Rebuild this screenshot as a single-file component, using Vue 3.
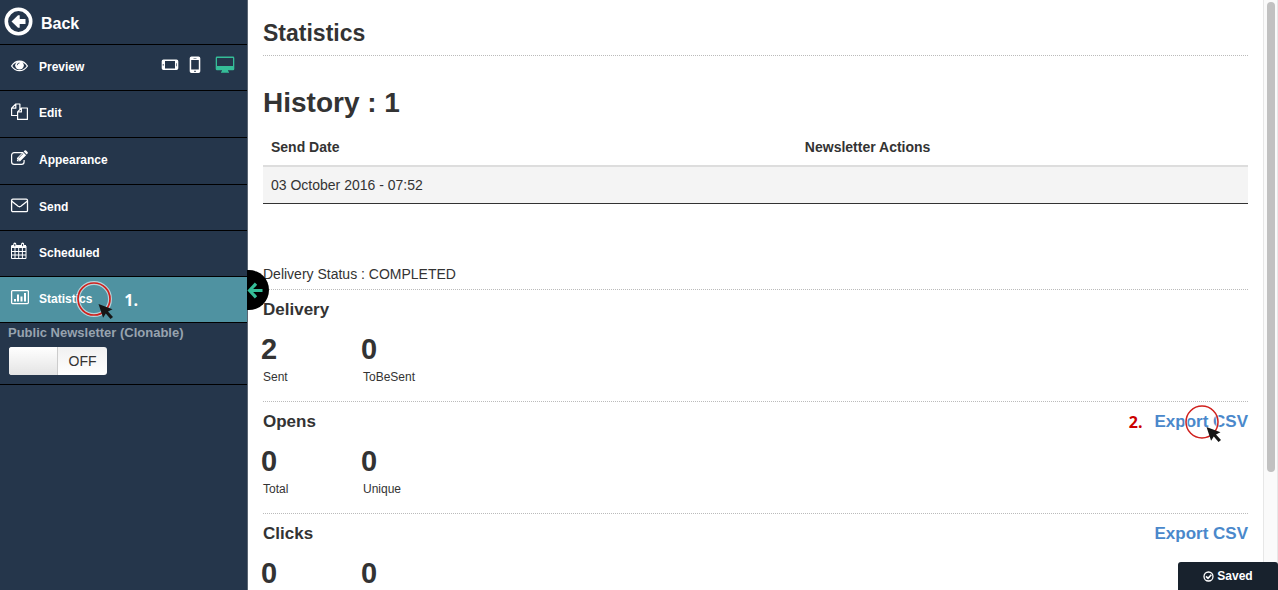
<script setup>
const menu = [
  { id: 'preview', label: 'Preview' },
  { id: 'edit', label: 'Edit' },
  { id: 'appearance', label: 'Appearance' },
  { id: 'send', label: 'Send' },
  { id: 'scheduled', label: 'Scheduled' },
  { id: 'statistics', label: 'Statistics' }
]
const sections = [
  { title: 'Delivery', stats: [{ value: 2, label: 'Sent' }, { value: 0, label: 'ToBeSent' }] },
  { title: 'Opens', step: '2.', csv: true, stats: [{ value: 0, label: 'Total' }, { value: 0, label: 'Unique' }] },
  { title: 'Clicks', csv: true, stats: [{ value: 0 }, { value: 0 }] }
]
</script>

<template>
  <div class="page">
    <aside class="side">
      <a class="back" href="#">
        <svg width="30" height="30" viewBox="0 0 30 30">
          <circle cx="15.5" cy="14.5" r="12.2" fill="none" stroke="#fff" stroke-width="3.6" />
          <path d="M8.500 14.500 15 8.300h1.700v3.700h5.800v5h-5.800v3.700H15z" fill="#fff" />
        </svg>
        <span>Back</span>
      </a>
      <nav>
        <div v-for="m in menu" :key="m.id" class="item" :class="m.id">
          <a class="link" href="#">
            <svg v-if="m.id === 'preview'" class="icon" viewBox="0 0 19 19">
              <path d="M1.600 10C3.600 6.700 6.200 5.100 9.500 5.100s5.900 1.600 7.900 4.900c-2 3.100-4.600 4.700-7.900 4.700S3.600 13.100 1.600 10z" fill="none" stroke="#fff" stroke-width="1.300" />
              <circle cx="9.500" cy="9.200" r="4.300" fill="#fff" />
              <path d="M7.300 9.200a2.200 2.200 0 0 1 2.200-2.200" fill="none" stroke="#25364b" stroke-width=".8" />
            </svg>
            <svg v-else-if="m.id === 'edit'" class="icon" viewBox="0 0 19 19" fill="none" stroke="#fff" stroke-width="1.200" stroke-linejoin="round">
              <path d="M7 12.500H1.600V5.200L5.800 1h4.100v5M5.800 1v4.200H1.600M7.600 16.400V8.800L11.400 5h6v11.400zM11.400 5v3.900H7.600" />
            </svg>
            <svg v-else-if="m.id === 'appearance'" class="icon" viewBox="0 0 19 19">
              <g transform="translate(0 -1)">
                <path d="M13 3.600H4.200a2.600 2.600 0 0 0-2.600 2.600v6.600a2.600 2.600 0 0 0 2.600 2.600h7.300a2.600 2.600 0 0 0 2.600-2.600V11" fill="none" stroke="#fff" stroke-width="1.200" />
                <path d="m6.900 12.300.1-3.200 6-6 3.100 3.100-6 6zM13.700 2.400l.9-.9q.8-.6 1.500.1l1.400 1.400q.7.800.1 1.500l-.9.900z" fill="#fff" />
                <path d="m8.700 8.900 4.500-4.400M7.500 10.300l1.400 1.400" stroke="#25364b" stroke-width=".7" />
              </g>
            </svg>
            <svg v-else-if="m.id === 'send'" class="icon" viewBox="0 0 19 19" fill="none" stroke="#fff" stroke-width="1.300" stroke-linejoin="round">
              <rect x="1.600" y="3.200" width="15.900" height="12.500" rx="1.300" />
              <path d="M1.800 5.300c2 1.700 4.100 3.200 6 4.800q1.700 1.300 3.400 0c1.900-1.600 4-3.100 6-4.800" />
            </svg>
            <svg v-else-if="m.id === 'scheduled'" class="icon" viewBox="0 0 19 19" fill="none" stroke="#fff">
              <path d="M1.500 4h14.500v12.500H1.500zM5 6v10M8.700 6v10M12.400 6v10M1.500 9.500H16M1.500 13H16" />
              <path d="M1.500 4.500H16" stroke-width="3" />
              <path d="M4.800 2v2M12.600 2v2" stroke-width="3" stroke-linecap="round" />
              <path d="M4.800 2v2.200M12.600 2v2.200" stroke="#25364b" />
            </svg>
            <svg v-else class="icon" viewBox="0 0 19 19" fill="none" stroke="#fff">
              <rect x="1.600" y="2.600" width="16.800" height="13" rx="1" stroke-width="1.300" />
              <path d="M5 11V13.500M8 6.500V13.500M11.500 8.500V13.500M15 5V13.500" stroke-width="2" />
            </svg>
            <span>{{ m.label }}</span>
          </a>
          <div v-if="m.id === 'preview'" class="devices">
            <button aria-label="Landscape phone">
              <svg width="18" height="12" viewBox="0 0 18 12">
                <path fill-rule="evenodd" d="M2.500.5h13q1.800 0 1.800 1.800v7q0 1.800-1.800 1.800h-13Q.7 11.100.7 9.300v-7Q.7.5 2.500.5zM4 2v7.600h10V2z" fill="#fff" />
                <path d="M1.700 5.200h1.100v1.200H1.700zM15.400 4.300h.6v3h-.6z" fill="#25364b" />
              </svg>
            </button>
            <button aria-label="Portrait phone">
              <svg width="12" height="18" viewBox="0 0 12 18">
                <path fill-rule="evenodd" d="M2.500.5h7q1.800 0 1.800 1.800v13q0 1.800-1.800 1.800h-7Q.7 17.100.7 15.300v-13Q.7.5 2.500.5zM2.200 3.900v9.600h7.600V3.900z" fill="#fff" />
                <path d="M4.500 2h3v.6h-3zM5.300 14.800h1.400V16H5.300z" fill="#25364b" />
              </svg>
            </button>
            <button class="desktop" aria-label="Desktop">
              <svg width="20" height="18" viewBox="0 0 20 18">
                <path fill-rule="evenodd" d="M2 .6h16q1.300 0 1.300 1.300v11.200q0 1.200-1.300 1.200h-5v1.300h1v1.200H6v-1.200h1v-1.300H2Q.7 14.300.7 13.100V1.900Q.7.6 2 .6zM2 1.900v8.200h16V1.900z" fill="#35bd98" />
              </svg>
            </button>
          </div>
          <b v-if="m.id === 'statistics'" class="step">1.</b>
          <svg v-if="m.id === 'statistics'" class="pointer" viewBox="0 0 40 40">
            <circle cx="18" cy="18" r="16" fill="none" stroke="#fff" stroke-opacity=".6" stroke-width="4" />
            <circle cx="18" cy="18" r="16" fill="none" stroke="#d0201d" stroke-width="1.700" />
            <path d="m22.500 23 14 5.300-4.500 2.200 5 5.500-2.500 2-4.700-5.500-2.700 4.200z" fill="#161616" />
          </svg>
        </div>
      </nav>
      <div class="public">
        <span id="public-label">Public Newsletter (Clonable)</span>
        <button class="toggle" role="switch" aria-checked="false" aria-labelledby="public-label"><i></i><span>OFF</span></button>
      </div>
      <button class="collapse" aria-label="Collapse sidebar">
        <svg width="16" height="18" viewBox="0 0 16 18">
          <path d="M9 2.700 2.600 9.500 9 16.300M3 9.500H15.500" fill="none" stroke="#35bd98" stroke-width="3.200" />
        </svg>
      </button>
    </aside>

    <main class="main">
      <h1>Statistics</h1>
      <h2>History : 1</h2>
      <table>
        <thead><tr><th>Send Date</th><th>Newsletter Actions</th></tr></thead>
        <tbody><tr><td>03 October 2016 - 07:52</td><td></td></tr></tbody>
      </table>
      <p class="status">Delivery Status : COMPLETED</p>
      <section v-for="s in sections" :key="s.title">
        <header>
          <h3>{{ s.title }}</h3>
          <b v-if="s.step" class="num">{{ s.step }}</b>
          <a v-if="s.csv" href="#">Export CSV</a>
          <svg v-if="s.step" class="pointer" viewBox="0 0 40 40">
            <circle cx="18" cy="18" r="16" fill="none" stroke="#fff" stroke-opacity=".6" stroke-width="4" />
            <circle cx="18" cy="18" r="16" fill="none" stroke="#d0201d" stroke-width="1.500" />
            <path d="m22.500 23 14 5.300-4.500 2.200 5 5.500-2.500 2-4.700-5.500-2.700 4.200z" fill="#161616" />
          </svg>
        </header>
        <div class="stats">
          <div v-for="(t, i) in s.stats" :key="i" class="stat">
            <strong>{{ t.value }}</strong>
            <span v-if="t.label">{{ t.label }}</span>
          </div>
        </div>
      </section>
    </main>

    <div class="track"><div class="thumb"></div></div>

    <div class="saved" role="status">
      <svg width="11" height="11" viewBox="0 0 11 11" fill="none" stroke="#fff">
        <circle cx="5.500" cy="5.500" r="4.500" stroke-width="1.300" />
        <path d="m3 5.400 2 2 3.300-3.600" stroke-width="1.600" />
      </svg>
      <span>Saved</span>
    </div>
  </div>
</template>

<style>
body { background: #fff; }
</style>

<style scoped>
* { box-sizing: border-box; }
.page {
  display: flex;
  height: 100vh;
  overflow: hidden;
  position: relative;
  font: 14px/20px "Liberation Sans", Arial, sans-serif;
  color: #333;
}
a { text-decoration: none; }
button { border: 0; padding: 0; background: none; font: inherit; cursor: pointer; }
svg { display: block; flex: none; }
.side {
  position: relative;
  flex: none;
  width: 248px;
  background: #25364b;
  border-right: 1px solid #5b6673;
  color: #fff;
}
.back {
  display: flex;
  align-items: center;
  gap: 8px;
  height: 45px;
  padding-left: 3px;
  border-bottom: 1px solid #000;
  color: #fff;
  font-size: 16px;
  font-weight: bold;
}
.back span { padding-top: 3px; }
.item {
  position: relative;
  display: flex;
  align-items: center;
  height: 46px;
  padding: 0 12px 4px 10px;
  border-bottom: 1px solid #000;
}
.edit, .appearance { height: 47px; }
.link {
  display: flex;
  align-items: center;
  gap: 10px;
  color: #fff;
  font-size: 12px;
  font-weight: bold;
}
.icon { width: 19px; height: 19px; }
.link span { padding-top: 2px; }
.devices { display: flex; align-items: center; margin-left: auto; padding-bottom: 2px; gap: 10px; }
.devices .desktop { margin-left: 4px; }
.statistics { background: #4f92a1; }
.step { margin-left: 32px; padding-top: 4px; font: bold 16px/20px "Open Sans", sans-serif; }
.pointer { position: absolute; width: 40px; height: 40px; pointer-events: none; }
.item .pointer { left: 76px; top: 4px; }
.public {
  height: 62px;
  padding-left: 8px;
  border-bottom: 1px solid #000;
  color: #97a3af;
  font-size: 13px;
  font-weight: bold;
}
.toggle {
  display: flex;
  width: 98px;
  height: 28px;
  margin: 4px 0 0 1px;
  border-radius: 3px;
  overflow: hidden;
  background: linear-gradient(#f1f1f1, #fff);
  color: #333;
  font-size: 14px;
  font-weight: normal;
  line-height: 28px;
}
.toggle i { width: 49px; height: 28px; border-right: 1px solid #ccc; background: linear-gradient(#fff, #e4e4e4); }
.toggle span { flex: 1; }
.collapse {
  position: absolute;
  left: 100%;
  top: 270px;
  width: 22px;
  height: 40px;
  border-radius: 0 20px 20px 0;
  background: #000;
}
.main { flex: 1; min-width: 0; padding: 0 15px; overflow: hidden; }
h1, h2, h3, p { margin: 0; }
h1 { height: 56px; padding-top: 18px; border-bottom: 1px dotted #bbb; font-size: 23px; line-height: 30px; }
h2 { padding: 31px 0 9px; font-size: 28px; line-height: 32px; }
table { width: 100%; table-layout: fixed; border-collapse: separate; border-spacing: 0; }
th, td { padding: 0 8px; text-align: left; }
th:first-child { width: 54.200%; }
th { height: 39px; border-bottom: 2px solid #ddd; }
td { height: 37px; background: #f4f4f4; border-bottom: 1px solid #333; }
.status { padding: 60px 0 5px; }
section { height: 112px; border-top: 1px dotted #bbb; }
header { position: relative; display: flex; align-items: center; height: 40px; font-size: 17px; }
h3 { margin-right: auto; font-size: 17px; }
header a { color: #4a88cb; font-weight: bold; }
.num { margin-right: 12px; color: #c00; font: bold 16px/20px "Open Sans", sans-serif; }
header .pointer { right: 24px; top: 2px; }
.stats { display: flex; }
.stat { width: 100px; }
.stat strong { display: block; margin-left: -2px; font-size: 29px; line-height: 38px; }
.stat span { display: block; font-size: 12px; line-height: 18px; }
.track { flex: none; width: 15px; padding: 2px 2px 0 3px; border: solid #e7e7e7; border-width: 0 1px; background: #fafafa; }
.thumb { width: 8px; height: 80%; border-radius: 4px; background: #c1c1c1; }
.saved {
  position: absolute;
  right: 0;
  bottom: 0;
  display: flex;
  align-items: center;
  justify-content: center;
  gap: 3px;
  width: 100px;
  height: 28px;
  border-radius: 3px 3px 0 0;
  background: #18222d;
  color: #fff;
  font-size: 12px;
  font-weight: bold;
}
</style>
